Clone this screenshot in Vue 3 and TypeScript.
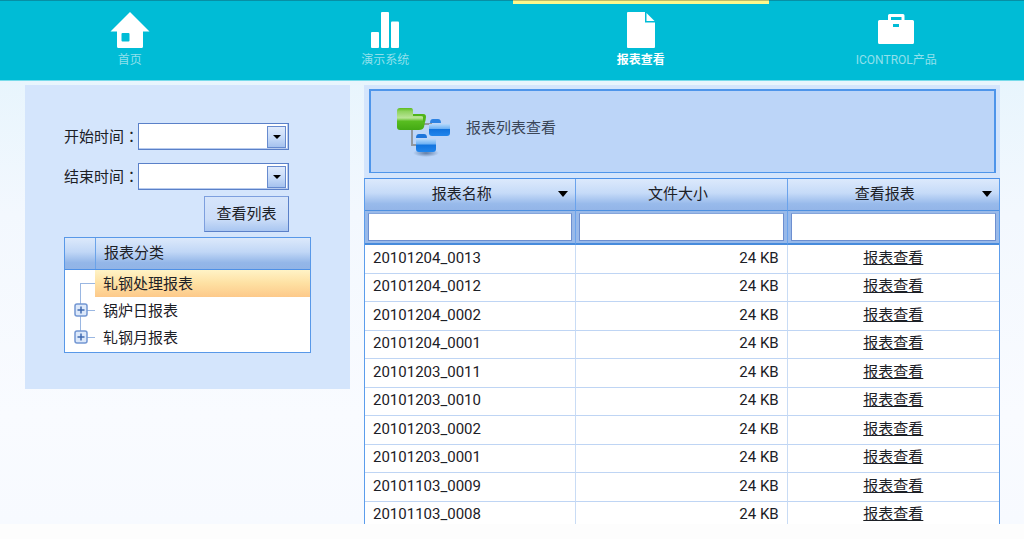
<script setup lang="ts">
import { ref } from 'vue'

type IconName = 'home' | 'chart' | 'file' | 'case'

interface NavItem {
  label: string
  icon: IconName
}

interface Category {
  label: string
  expandable: boolean
}

const navItems: NavItem[] = [
  { label: '首页', icon: 'home' },
  { label: '演示系统', icon: 'chart' },
  { label: '报表查看', icon: 'file' },
  { label: 'ICONTROL产品', icon: 'case' },
]
const activeNav = ref('报表查看')

const categories: Category[] = [
  { label: '轧钢处理报表', expandable: false },
  { label: '锅炉日报表', expandable: true },
  { label: '轧钢月报表', expandable: true },
]
const selectedCategory = ref('轧钢处理报表')

const columns = [
  { title: '报表名称', sortable: true },
  { title: '文件大小', sortable: false },
  { title: '查看报表', sortable: true },
]

const reports = [
  '20101204_0013',
  '20101204_0012',
  '20101204_0002',
  '20101204_0001',
  '20101203_0011',
  '20101203_0010',
  '20101203_0002',
  '20101203_0001',
  '20101103_0009',
  '20101103_0008',
].map((name) => ({ name, size: '24 KB' }))

const startTime = ref('')
const endTime = ref('')
const filters = ref(['', '', ''])
</script>

<template>
  <div class="page">
    <nav class="nav">
      <a
        v-for="item in navItems"
        :key="item.label"
        href="#"
        class="nav-item"
        :class="{ active: item.label === activeNav }"
        @click.prevent="activeNav = item.label"
      >
        <svg class="nav-icon" viewBox="0 0 40 36" aria-hidden="true">
          <path
            v-if="item.icon === 'home'"
            fill-rule="evenodd"
            d="M20 0 L39.500 19.500 H33 V34.500 Q33 36 31.500 36 H8.500 Q7 36 7 34.500 V19.500 H.5 Z M12.500 21 Q11.500 21 11.500 22 V28.500 Q11.500 29.500 12.500 29.500 H18.500 Q19.500 29.500 19.500 28.500 V22 Q19.500 21 18.500 21 Z"
          />
          <g v-else-if="item.icon === 'chart'">
            <rect x="6" y="20" width="8" height="16" rx="1" />
            <rect x="16" y="0" width="8" height="36" rx="1" />
            <rect x="26" y="9.500" width="8" height="26.500" rx="1" />
          </g>
          <g v-else-if="item.icon === 'file'">
            <path d="M7 0 H24 V10.500 H34 V35 Q34 36 33 36 H7 Q6 36 6 35 V1 Q6 0 7 0 Z" />
            <path d="M25.500 1 L33.500 9 H25.500 Z" />
          </g>
          <path
            v-else
            fill-rule="evenodd"
            d="M12 8 V3.500 Q12 2 13.500 2 H27 Q28.500 2 28.500 3.500 V8 H36.500 Q38 8 38 9.500 V30.500 Q38 32 36.500 32 H3.500 Q2 32 2 30.500 V9.500 Q2 8 3.500 8 Z M15 5 V8 H25.500 V5 Z M17 12 V15 H23 V12 Z"
          />
        </svg>
        <span>{{ item.label }}</span>
      </a>
    </nav>

    <main class="content">
      <aside class="side">
        <form class="query" @submit.prevent>
          <div class="field">
            <label for="start">开始时间<span class="colon">：</span></label>
            <div class="combo">
              <select id="start" v-model="startTime"></select>
              <span class="combo-arrow"></span>
            </div>
          </div>
          <div class="field">
            <label for="end">结束时间<span class="colon">：</span></label>
            <div class="combo">
              <select id="end" v-model="endTime"></select>
              <span class="combo-arrow"></span>
            </div>
          </div>
          <button type="submit" class="submit">查看列表</button>
        </form>

        <section class="tree">
          <header class="tree-head"><span>报表分类</span></header>
          <ul>
            <li v-for="c in categories" :key="c.label">
              <span class="branch">
                <button
                  v-if="c.expandable"
                  type="button"
                  class="expander"
                  :aria-label="'展开' + c.label"
                >
                  <svg viewBox="0 0 14 14" aria-hidden="true">
                    <rect x="1" y="1" width="12" height="12" rx="2" fill="#dce8fa" stroke="#7396d2" stroke-width="1.500" />
                    <path d="M3.500 7 H10.500 M7 3.500 V10.500" stroke="#3f69b0" stroke-width="1.500" />
                  </svg>
                </button>
              </span>
              <button
                type="button"
                class="tree-label"
                :class="{ selected: c.label === selectedCategory }"
                @click="selectedCategory = c.label"
              >
                {{ c.label }}
              </button>
            </li>
          </ul>
        </section>
      </aside>

      <section class="reports">
        <div class="banner-wrap">
          <div class="banner">
            <svg class="folders" viewBox="0 0 56 50" aria-hidden="true">
              <defs>
                <linearGradient id="green" x1="0" y1="0" x2="0" y2="1">
                  <stop offset="0" stop-color="#5cbb1e" />
                  <stop offset=".15" stop-color="#8fd35e" />
                  <stop offset=".45" stop-color="#b9e596" />
                  <stop offset=".6" stop-color="#58bd20" />
                  <stop offset="1" stop-color="#43a914" />
                </linearGradient>
                <linearGradient id="blue" x1="0" y1="0" x2="0" y2="1">
                  <stop offset="0" stop-color="#b4d8fb" />
                  <stop offset=".4" stop-color="#6bb0f4" />
                  <stop offset=".45" stop-color="#1173de" />
                  <stop offset="1" stop-color="#2286ec" />
                </linearGradient>
                <radialGradient id="shade">
                  <stop offset="0" stop-color="#47658f" stop-opacity=".8" />
                  <stop offset="1" stop-color="#47658f" stop-opacity="0" />
                </radialGradient>
              </defs>
              <ellipse cx="30" cy="46" rx="13" ry="4" fill="url(#shade)" />
              <path d="M16 20 V38 H22 M28 17 H36" fill="none" stroke="#92989f" stroke-width="2" />
              <path d="M1 4 Q1 1 4 1 H15 Q17 1 17 4 V7 H27 Q30 7 30 10 L28 20 Q27 23 23 23 H4 Q1 23 1 20 Z" fill="url(#green)" />
              <path d="M17 7 H27 Q30 7 30 10 L29 15 H27 V10 Q27 9 25 9 H17 Z" fill="#4fb41b" />
              <path d="M34 16 Q34 12 37 12 H42 Q45 12 45 16 Z" fill="#2c82e2" />
              <path d="M33 17 H54 V26 Q54 29 51 29 H36 Q33 29 33 26 Z" fill="url(#blue)" />
              <path d="M20 31 Q20 27 23 27 H28 Q31 27 31 31 Z" fill="#1d75db" />
              <path d="M20 32 H40 V42 Q40 45 37 45 H23 Q20 45 20 42 Z" fill="url(#blue)" />
            </svg>
            <h1>报表列表查看</h1>
          </div>
        </div>

        <table class="grid">
          <thead>
            <tr class="titles">
              <th v-for="col in columns" :key="col.title" scope="col">
                <div class="title">
                  <span>{{ col.title }}</span>
                  <i v-if="col.sortable" class="caret"></i>
                </div>
              </th>
            </tr>
            <tr class="filters">
              <td v-for="(col, i) in columns" :key="col.title">
                <input v-model="filters[i]" type="text" :aria-label="col.title" />
              </td>
            </tr>
          </thead>
          <tbody>
            <tr v-for="r in reports" :key="r.name">
              <td>{{ r.name }}</td>
              <td class="size">{{ r.size }}</td>
              <td class="view"><a href="#" @click.prevent>报表查看</a></td>
            </tr>
          </tbody>
        </table>
      </section>
    </main>
  </div>
</template>

<style>
body {
  margin: 0;
  background: #fdfdfd;
}
</style>

<style scoped>
.page {
  display: flex;
  flex-direction: column;
  height: 100vh;
  padding-bottom: 15px;
  box-sizing: border-box;
  overflow: hidden;
  font-family: Roboto, 'Noto Sans CJK SC', sans-serif;
  font-size: 15px;
  line-height: 20px;
  color: #1c2026;
}

.page *,
.page *::before,
.page *::after {
  box-sizing: border-box;
}

button,
input,
select {
  margin: 0;
  padding: 0;
  font: inherit;
  color: inherit;
}

.nav {
  display: grid;
  grid-template-columns: repeat(4, 1fr);
  flex: none;
  height: 81px;
  padding-left: 2px;
  background: #00bcd6;
  border-top: 1px solid #078fa5;
  border-bottom: 1px solid #76dbea;
}

.nav-item {
  position: relative;
  display: flex;
  flex-direction: column;
  align-items: center;
  padding-top: 11px;
  gap: 2px;
  font-size: 12px;
  color: #90e0ec;
  text-decoration: none;
}

.nav-item.active {
  color: #fff;
  font-weight: 700;
}

.nav-item.active::before {
  content: '';
  position: absolute;
  top: -1px;
  left: 0;
  right: 0;
  height: 4px;
  background: #fdf88c;
  border-top: 1px solid #c1bc68;
}

.nav-icon {
  width: 40px;
  height: 36px;
  fill: #fff;
}

.content {
  display: grid;
  grid-template-columns: 325fr 636fr;
  align-items: start;
  gap: 14px;
  flex: 1;
  min-height: 0;
  padding: 4px 24px 0 25px;
  overflow: hidden;
  background: linear-gradient(#e8f5fd, #f3f8fe 30%, #f9fbff 75%, #f7faff);
}

.side {
  padding: 38px 39px 36px;
  background: #d4e5fc;
}

.query {
  display: flex;
  flex-direction: column;
  gap: 13px;
  width: 225px;
}

.field {
  display: flex;
  align-items: center;
}

.field label {
  width: 74px;
  white-space: nowrap;
}

.colon {
  font-family: 'Noto Sans CJK TC', sans-serif;
}

.combo {
  position: relative;
  flex: 1;
  height: 27px;
}

.combo select {
  display: block;
  width: 100%;
  height: 100%;
  background: #fff;
  border: 1px solid #5a80c8;
  border-radius: 0;
  box-shadow: inset -1px -1px #b7cbef;
  appearance: none;
}

.combo-arrow {
  position: absolute;
  top: 3px;
  right: 3px;
  bottom: 2px;
  display: flex;
  align-items: center;
  justify-content: center;
  width: 19px;
  background: linear-gradient(#e0ebfc, #c6daf8 55%, #a5c2ee);
  border: 1px solid #678bcf;
  pointer-events: none;
}

.combo-arrow::before {
  content: '';
  border: 4px solid transparent;
  border-top: 4px solid #000;
  border-bottom: 0;
}

.submit {
  align-self: flex-end;
  width: 85px;
  height: 36px;
  margin-top: -7px;
  background: linear-gradient(#d6e5fb, #cbddf8 65%, #a9c6f1);
  border: 1px solid #5a80c8;
  border-top-color: #7d9fde;
  border-left-color: #7d9fde;
}

.tree {
  margin-top: 5px;
  background: #fff;
  border: 1px solid #5898e8;
}

.tree-head {
  display: flex;
  height: 32px;
  padding-left: 30px;
  background: linear-gradient(#dce9fb, #c1d7f6 45%, #93b6e8 80%, #92b4e6);
  border-bottom: 1px solid #4e90e6;
}

.tree-head span {
  flex: 1;
  padding: 5px 8px;
  border-left: 1px solid #6ba3e9;
}

.tree ul {
  margin: 0;
  padding: 0 0 1px;
  list-style: none;
}

.tree li {
  display: flex;
  height: 27px;
}

.branch {
  position: relative;
  width: 30px;
}

.branch::before {
  content: '';
  position: absolute;
  top: 0;
  bottom: 0;
  left: 15px;
  border-left: 1px solid #9ab7e2;
}

.branch::after {
  content: '';
  position: absolute;
  top: 13px;
  left: 15px;
  right: 0;
  border-top: 1px solid #9ab7e2;
}

.tree li:first-child .branch::before {
  top: 13px;
}

.tree li:last-child .branch::before {
  bottom: 13px;
}

.expander {
  position: absolute;
  z-index: 1;
  top: 6px;
  left: 9px;
  width: 14px;
  height: 14px;
  background: none;
  border: 0;
}

.expander svg {
  display: block;
}

.tree-label {
  flex: 1;
  padding: 0 8px;
  text-align: left;
  background: none;
  border: 0;
}

.tree-label.selected {
  background: linear-gradient(#fff3c6, #fee0a2 50%, #fdc98a);
}

.banner-wrap {
  padding: 4px 4px 5px 5px;
  background: #d4e5fc;
}

.banner {
  display: flex;
  align-items: center;
  gap: 14px;
  height: 84px;
  padding-left: 25px;
  background: #bcd5f8;
  border: 2px solid #4e95ea;
  border-bottom-width: 1px;
}

.folders {
  width: 56px;
  height: 50px;
}

.banner h1 {
  margin: 0 0 8px;
  font-size: 15px;
  font-weight: 400;
  line-height: 20px;
  color: #3b4657;
}

.grid {
  width: 100%;
  table-layout: fixed;
  border-spacing: 0;
  background: #fff;
  border: 1px solid #5c9dec;
  border-top-color: #4a90e8;
}

.grid th,
.grid td {
  padding: 0;
  border-right: 1px solid #c9dcf5;
  border-bottom: 1px solid #bfd5f4;
}

.grid th:last-child,
.grid td:last-child {
  border-right: 0;
}

.titles th {
  height: 32px;
  padding-bottom: 2px;
  font-weight: 400;
  background: linear-gradient(#dce9fc, #c6dbf8 45%, #98baeb 80%, #93b5e8);
  border-right-color: #6ba3ec;
  border-bottom-color: #4e90e0;
}

.title {
  display: flex;
  align-items: center;
  padding-right: 7px;
}

.title span {
  flex: 1;
}

.caret {
  border: 5px solid transparent;
  border-top: 6px solid #000;
  border-bottom: 0;
}

.filters td {
  height: 34px;
  padding: 0 3px;
  background: #98b9e9;
  border-right-color: #6ba3ec;
  border-bottom: 2px solid #478bdc;
}

.filters input {
  display: block;
  width: 100%;
  height: 28px;
  padding: 0 4px;
  background: #fff;
  border: 1px solid #6d8fd0;
  border-top-color: #86a5da;
  border-radius: 0;
}

tbody td {
  height: 29px;
}

tbody tr:nth-child(even) td {
  height: 28px;
}

.grid tbody td {
  padding-bottom: 3px;
}

.grid tbody td:first-child {
  padding-left: 8px;
}

.grid tbody .size {
  padding-right: 8px;
  text-align: right;
}

.view {
  text-align: center;
}

.view a {
  color: inherit;
  text-decoration: underline;
}
</style>
